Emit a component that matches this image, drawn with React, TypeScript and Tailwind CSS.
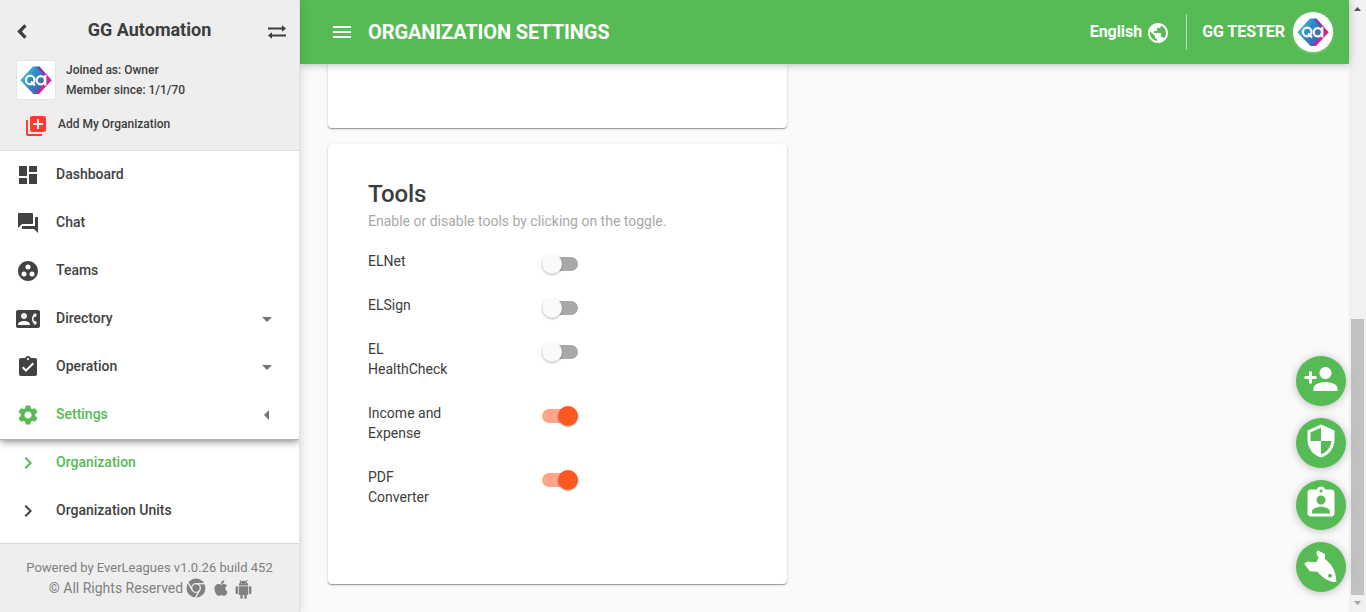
import type { ComponentType, ReactNode } from 'react';
import {
  MdArrowDropDown,
  MdArrowLeft,
  MdAssignmentInd,
  MdAssignmentTurnedIn,
  MdChevronRight,
  MdContactPhone,
  MdDashboard,
  MdGroupWork,
  MdLibraryAdd,
  MdMenu,
  MdPersonAdd,
  MdPublic,
  MdQuestionAnswer,
  MdSecurity,
  MdSettings,
} from 'react-icons/md';
import { FaApple } from 'react-icons/fa';

type IconType = ComponentType<{ className?: string }>;

function Logo({ id }: { id: string }) {
  return (
    <svg viewBox="0 0 40 40" className="h-10 w-10 shrink-0">
      <defs>
        <linearGradient id={id} x1="0" y1="0" x2="1" y2="0.6">
          <stop offset="0" stopColor="#3fdbe6" />
          <stop offset="0.5" stopColor="#2f8ac8" />
          <stop offset="1" stopColor="#4a55b0" />
        </linearGradient>
        <linearGradient id={id + 'r'} x1="0" y1="0" x2="0" y2="1">
          <stop offset="0" stopColor="#6b3fa0" />
          <stop offset="0.5" stopColor="#e3189a" />
          <stop offset="1" stopColor="#f0148c" />
        </linearGradient>
      </defs>
      <path d="M20 6.500h3.500L35.700 20.300 23 34h-4z" fill={'url(#' + id + 'r)'} />
      <path d="M17 6.500h3.500L32 20.300 19.500 34h-2L4.300 20.300z" fill={'url(#' + id + ')'} />
      <g fill="none" stroke="#fff" strokeWidth="2.200">
        <circle cx="14.200" cy="20" r="4.300" />
        <path d="M15 21.500l4 4" />
        <circle cx="24.800" cy="20.200" r="4.100" />
        <path d="M29.300 15v10.500" />
      </g>
    </svg>
  );
}

function BackIcon() {
  return (
    <svg viewBox="0 0 10 15" className="ml-px mt-[3px] h-[15px] w-[10px]" fill="#3d3d3d">
      <path d="M7.300.300 9.600 2.600 4.900 7.500 9.600 12.400 7.300 14.700.200 7.500z" />
    </svg>
  );
}

function SwapIcon() {
  return (
    <svg viewBox="0 0 18 14" className="h-[14px] w-[18px]" fill="#3d3d3d">
      <path d="M0 2.500h14V.300l4 3.200-4 3.200V4.500H0zM18 9.500H4V7.300L0 10.500l4 3.200v-2.200h14z" />
    </svg>
  );
}

function RocketIcon() {
  return (
    <svg viewBox="0 0 33 33" className="h-[33px] w-[33px]" fill="#fff">
      <path
        fillRule="evenodd"
        d="M13.700.200 21.200 4.300 20.800 9C28 14 32.300 21.500 32.300 32 25 32 19.500 28.500 13.500 21.700L5.800 21.200.300 13.700C2.500 11.500 4.500 11 7 12L12.500 12.200 14.600 7.300C12 5 11.700 2 13.700.200ZM26 23.700a2 2 0 1 0 0 4 2 2 0 0 0 0-4Z"
      />
    </svg>
  );
}

function ChromeIcon() {
  return (
    <svg viewBox="0 0 20 20" className="ml-[3px] h-5 w-5">
      <circle cx="10" cy="10" r="9.500" fill="#808080" />
      <g fill="none" stroke="#eee" strokeWidth="1.300">
        <circle cx="10" cy="10" r="4.300" />
        <path d="M10 5.700h9.500" />
        <path d="M10 5.700h9.500" transform="rotate(120 10 10)" />
        <path d="M10 5.700h9.500" transform="rotate(240 10 10)" />
      </g>
    </svg>
  );
}

function AndroidIcon() {
  return (
    <svg viewBox="0 0 24 24" className="ml-1 mt-0.5 h-[19px] w-[19px]" fill="#808080">
      <path d="M6 18c0 .55.45 1 1 1h1v3.5c0 .83.67 1.5 1.5 1.5s1.5-.67 1.5-1.5V19h2v3.5c0 .83.67 1.5 1.5 1.5s1.5-.67 1.5-1.5V19h1c.55 0 1-.45 1-1V8H6v10zM3.5 8C2.67 8 2 8.67 2 9.5v7c0 .83.67 1.5 1.5 1.5S5 17.33 5 16.5v-7C5 8.67 4.33 8 3.5 8zm17 0c-.83 0-1.5.67-1.5 1.5v7c0 .83.67 1.5 1.5 1.5s1.5-.67 1.5-1.5v-7c0-.83-.67-1.5-1.5-1.5zm-4.97-5.84l1.3-1.3c.2-.2.2-.51 0-.71-.2-.2-.51-.2-.71 0l-1.480 1.480C13.850 1.230 12.950 1 12 1c-.96 0-1.860.23-2.660.63L7.850.15c-.2-.2-.51-.2-.71 0-.2.2-.2.51 0 .71l1.310 1.310C6.970 3.260 6 5.010 6 7h12c0-1.990-.97-3.750-2.470-4.840zM10 5H9V4h1v1zm5 0h-1V4h1v1z" />
    </svg>
  );
}

function NavItem({
  icon: Icon,
  label,
  active,
  trailing: Trailing,
}: {
  icon: IconType;
  label: string;
  active?: boolean;
  trailing?: IconType;
}) {
  return (
    <a
      className={
        'flex h-12 shrink-0 items-center pb-0.5 pl-4 pr-5 text-sm font-medium ' +
        (active ? 'text-[#56bb54]' : 'text-[#424242]')
      }
    >
      <Icon className="mr-4 mt-px h-6 w-6" />
      <span className="flex-1">{label}</span>
      {Trailing && <Trailing className="mt-0.5 h-6 w-6 text-[#757575]" />}
    </a>
  );
}

function Sidebar() {
  return (
    <aside className="relative z-20 flex w-[300px] shrink-0 flex-col border-r border-[#e0e0e0] bg-white shadow-[0_0_10px_rgba(0,0,0,0.16)]">
      <div className="h-[151px] shrink-0 border-b border-[#e0e0e0] bg-[#eee] text-[#3d3d3d]">
        <div className="flex h-[60px] items-center pl-4 pr-[13px]">
          <BackIcon />
          <h2 className="flex-1 pl-1 text-center text-lg font-bold leading-6">GG Automation</h2>
          <span className="mt-[3px]">
            <SwapIcon />
          </span>
        </div>
        <div className="flex items-center pl-4">
          <div className="flex h-10 w-10 items-center justify-center border border-[#e4e4e4] bg-white">
            <Logo id="side" />
          </div>
          <div className="ml-2.5 text-xs font-medium leading-5">
            <p>Joined as: Owner</p>
            <p>Member since: 1/1/70</p>
          </div>
        </div>
        <div className="mt-3 flex items-center pl-6 text-xs font-medium">
          <MdLibraryAdd className="mr-2.5 mt-0.5 h-6 w-6 text-[#ff3b30]" />
          <span className="-mt-0.5">Add My Organization</span>
        </div>
      </div>
      <nav className="flex min-h-0 flex-1 flex-col">
        <div className="relative flex shrink-0 flex-col shadow-[0_1px_0_#b0b0b0,0_2px_8px_rgba(0,0,0,0.55)] [clip-path:inset(0_0_-12px_0)]">
          <NavItem icon={MdDashboard} label="Dashboard" />
          <NavItem icon={MdQuestionAnswer} label="Chat" />
          <NavItem icon={MdGroupWork} label="Teams" />
          <NavItem icon={MdContactPhone} label="Directory" trailing={MdArrowDropDown} />
          <NavItem icon={MdAssignmentTurnedIn} label="Operation" trailing={MdArrowDropDown} />
          <NavItem icon={MdSettings} label="Settings" active trailing={MdArrowLeft} />
        </div>
        <NavItem icon={MdChevronRight} label="Organization" active />
        <NavItem icon={MdChevronRight} label="Organization Units" />
      </nav>
      <footer className="h-[69px] shrink-0 border-t border-[#d6d6d6] bg-[#eee] pt-3.5 text-center text-[13px] leading-5 text-[#808080]">
        <p>Powered by EverLeagues v1.0.26 build 452</p>
        <div className="flex h-5 items-center justify-center pl-[3px] text-sm leading-5">
          <span>© All Rights Reserved</span>
          <ChromeIcon />
          <FaApple className="ml-1.5 h-[18px] w-[18px]" />
          <AndroidIcon />
        </div>
      </footer>
    </aside>
  );
}

function Header() {
  return (
    <header className="relative z-10 flex h-16 shrink-0 items-center bg-[#56bb54] pl-[30px] pr-4 text-white shadow-[0_1px_8px_rgba(0,0,0,0.25)]">
      <MdMenu className="h-6 w-6" />
      <h1 className="ml-3.5 flex-1 text-xl font-bold tracking-[-0.11px]">ORGANIZATION SETTINGS</h1>
      <span className="font-bold tracking-[-0.05px]">English</span>
      <MdPublic className="ml-1 mt-0.5 h-6 w-6" />
      <span className="ml-4 h-9 w-px bg-[#c4d8c4]" />
      <span className="ml-[15px] mr-2 font-bold tracking-[-0.05px]">GG TESTER</span>
      <div className="flex h-10 w-10 items-center justify-center rounded-full bg-white shadow-[0_1px_3px_rgba(255,255,255,0.35)]">
        <Logo id="head" />
      </div>
    </header>
  );
}

function Toggle({ on }: { on?: boolean }) {
  return (
    <div
      className={
        'mt-1.5 flex h-3.5 w-9 items-center rounded-full ' +
        (on ? 'justify-end bg-[#ffa58a]' : 'bg-[#a8a8a8]')
      }
    >
      <span
        className={
          'h-5 w-5 shrink-0 rounded-full shadow-[0_1px_2px_rgba(0,0,0,0.3)] ' +
          (on ? 'bg-[#ff5722]' : 'bg-[#fafafa]')
        }
      />
    </div>
  );
}

const tools: { name: string; on?: boolean }[] = [
  { name: 'ELNet' },
  { name: 'ELSign' },
  { name: 'EL HealthCheck' },
  { name: 'Income and Expense', on: true },
  { name: 'PDF Converter', on: true },
];

function Fab({ children }: { children: ReactNode }) {
  return (
    <button className="flex h-[50px] w-[50px] items-center justify-center rounded-full bg-[#56bb54] text-white shadow-[0_1px_8px_rgba(0,0,0,0.25)]">
      {children}
    </button>
  );
}

function Scrollbar() {
  return (
    <div className="flex w-[17px] shrink-0 flex-col items-center bg-[#f1f1f1]">
      <svg viewBox="0 0 17 17" className="h-[17px] w-[17px]" fill="#505050">
        <path d="M5 11h7L8.500 7z" />
      </svg>
      <div className="mt-auto h-[276px] w-[13px] bg-[#c1c1c1]" />
      <svg viewBox="0 0 17 17" className="h-[17px] w-[17px]" fill="#a3a3a3">
        <path d="M5 6h7l-3.500 4z" />
      </svg>
    </div>
  );
}

const cardShadow =
  'shadow-[0_1px_3px_rgba(0,0,0,0.16),0_1px_1px_rgba(0,0,0,0.24),0_1px_0_rgba(0,0,0,0.08)]';

export default function App() {
  return (
    <div className="flex h-[612px] w-[1366px] overflow-hidden bg-[#fafafa] font-[Roboto,sans-serif] text-base text-[#3d3d3d]">
      <Sidebar />
      <div className="relative flex min-w-0 flex-1 flex-col">
        <Header />
        <main className="flex flex-1 flex-col gap-4 pl-7">
          <section className={'h-16 w-[459px] rounded-b bg-white ' + cardShadow} />
          <section className={'h-[440px] w-[459px] rounded bg-white px-10 pt-[34px] ' + cardShadow}>
            <h2 className="text-2xl leading-8 font-medium tracking-[-0.1px]">Tools</h2>
            <p className="mt-px text-sm leading-5 text-[#a8a8a8]">
              Enable or disable tools by clicking on the toggle.
            </p>
            <ul className="mt-5 flex flex-col gap-6 text-sm leading-5">
              {tools.map((tool) => (
                <li key={tool.name} className="flex items-start">
                  <span className="mr-[89px] w-[85px]">{tool.name}</span>
                  <Toggle on={tool.on} />
                </li>
              ))}
            </ul>
          </section>
        </main>
        <div className="absolute right-[3px] bottom-5 flex flex-col gap-3">
          <Fab>
            <MdPersonAdd className="-mt-1 h-9 w-9" />
          </Fab>
          <Fab>
            <MdSecurity className="-mt-1 h-9 w-9" />
          </Fab>
          <Fab>
            <MdAssignmentInd className="-mt-1 h-9 w-9" />
          </Fab>
          <Fab>
            <span className="-ml-0.5 -mt-0.5">
              <RocketIcon />
            </span>
          </Fab>
        </div>
      </div>
      <Scrollbar />
    </div>
  );
}
